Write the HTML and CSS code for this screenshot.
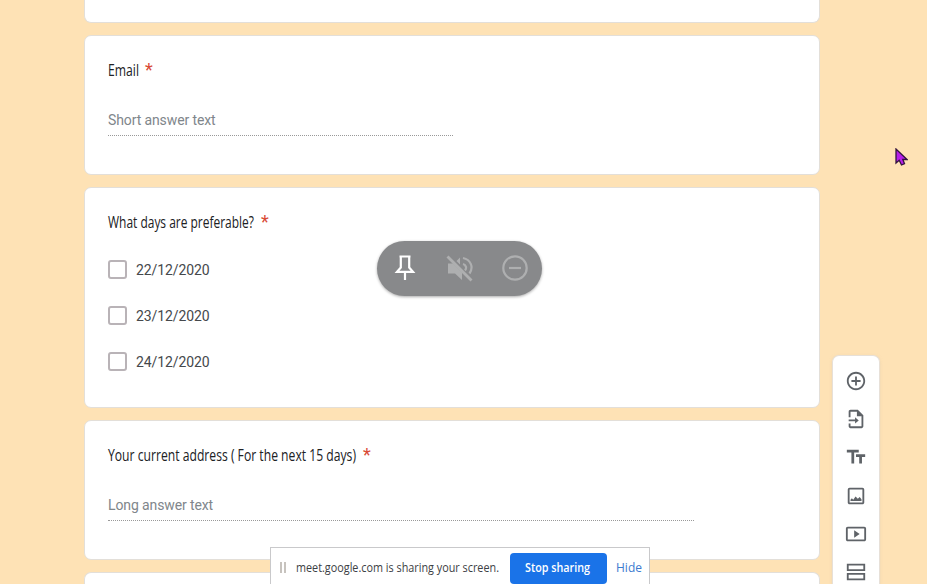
FILE: index.html
```html
<!DOCTYPE html>
<html lang="en">
<head>
<meta charset="utf-8">
<title>Form editor</title>
<link rel="stylesheet" href="styles.css">
</head>
<body>
<main class="form">
  <section class="card card-first"></section>
  <section class="card card-answer">
    <h2 class="question"><svg class="title" width="32" height="24"><text x="0" y="18" textLength="31" lengthAdjust="spacingAndGlyphs">Email</text></svg><span class="required">*</span></h2>
    <div class="answer answer-short">Short answer text</div>
  </section>
  <section class="card card-days">
    <h2 class="question"><svg class="title" width="148" height="24"><text x="0" y="18" textLength="146" lengthAdjust="spacingAndGlyphs">What days are preferable?</text></svg><span class="required">*</span></h2>
    <div class="options">
      <div class="option"><span class="box"></span><span class="date">22/12/2020</span></div>
      <div class="option"><span class="box"></span><span class="date">23/12/2020</span></div>
      <div class="option"><span class="box"></span><span class="date">24/12/2020</span></div>
    </div>
  </section>
  <section class="card card-answer">
    <h2 class="question"><svg class="title" width="250" height="24"><text x="0" y="18" textLength="248" lengthAdjust="spacingAndGlyphs">Your current address ( For the next 15 days)</text></svg><span class="required">*</span></h2>
    <div class="answer answer-long">Long answer text</div>
  </section>
  <section class="card card-last"></section>
</main>

<aside class="tools">
  <svg viewBox="0 0 24 24"><path d="M13 7h-2v4H7v2h4v4h2v-4h4v-2h-4V7zm-1-5C6.48 2 2 6.48 2 12s4.48 10 10 10 10-4.48 10-10S17.52 2 12 2zm0 18c-4.41 0-8-3.59-8-8s3.59-8 8-8 8 3.59 8 8-3.59 8-8 8z"/></svg>
  <svg viewBox="0 0 24 24"><path d="M14 2H6C4.900 2 4 2.900 4 4v6h2V4h7v5h5v11H6v-3H4v3c0 1.100.900 2 2 2h12c1.100 0 2-.900 2-2V8zM4 12.500v2h7V17l4-3.500-4-3.500v2.500z"/></svg>
  <svg viewBox="0 0 24 24"><path d="M2 4v3h5v12h3V7h5V4H2zm20 5H12v3h3.500v7h3v-7H22V9z"/></svg>
  <svg viewBox="0 0 24 24"><path d="M19 3H5a2 2 0 0 0-2 2v14c0 1.100.900 2 2 2h14c1.100 0 2-.900 2-2V5a2 2 0 0 0-2-2zm0 16H5V5h14v14zM6 17.500h12v-2l-2-2.500-2 2-2.500-2.500L9 16l-1.500-1.500L6 16z"/></svg>
  <svg viewBox="0 0 24 24"><path d="M10 8v8l6-4-6-4zm11-4H3c-1.100 0-2 .900-2 2v12c0 1.100.900 2 2 2h18c1.100 0 2-.900 2-2V6c0-1.100-.900-2-2-2zm0 14H3V6h18v12z"/></svg>
  <svg viewBox="0 0 24 24"><path d="M2 3v8h20V3H2zm18 6H4V5h16v4zM2 13v8h20v-8H2zm18 6H4v-4h16v4z"/></svg>
</aside>

<div class="pill">
  <svg class="pin" viewBox="0 0 28 28"><path d="M8.500 2.500h11M9.800 3v10.500L6 17.800h16l-3.800-4.300V3M14 18v8"/></svg>
  <svg class="mute" viewBox="0 0 28 28"><path class="fill" d="M2 9.500h5l9 9V26l-7-6.500H2zM10.500 7 14 3.500v7z"/><path d="M17 10c3 .8 4 4 2 6.500M17 4c7.500 1.500 11 9 6.500 15.500"/><path class="slash" d="M1.500 2.500l24 24"/></svg>
  <svg class="minus" viewBox="0 0 28 28"><circle cx="14" cy="14" r="11.700"/><path d="M8 14h12"/></svg>
</div>

<div class="share">
  <span class="grip"></span>
  <svg class="message" width="205" height="20"><text x="0" y="14" textLength="203" lengthAdjust="spacingAndGlyphs">meet.google.com is sharing your screen.</text></svg>
  <button class="stop"><svg width="67" height="20"><text x="0" y="14" textLength="65" lengthAdjust="spacingAndGlyphs">Stop sharing</text></svg></button>
  <a class="hide">Hide</a>
</div>

<svg class="cursor" viewBox="0 0 13 19"><path d="M1 1v14l3.200-2.700L6.500 17l3-1.300-1.700-4.200H12z"/></svg>
</body>
</html>
```

FILE: styles.css
```css
* { box-sizing: border-box; }
body {
  margin: 0;
  height: 584px;
  overflow: hidden;
  position: relative;
  background: #fee2b5;
  font-family: Roboto, "Liberation Sans", sans-serif;
}
.form {
  width: 736px;
  height: 584px;
  overflow: hidden;
  margin-left: 84px;
  display: flex;
  flex-direction: column;
  gap: 12px;
}
.card {
  flex: none;
  background: #fff;
  border: 1px solid #e3dfd9;
  border-radius: 7px;
  padding: 22px 23px;
}
.card-first { height: 23px; padding: 0; border-top: 0; border-radius: 0 0 7px 7px; }
.card-answer { height: 140px; }
.card-days { height: 221px; }
.card-last { height: 12px; padding: 0; border-bottom: 0; border-radius: 7px 7px 0 0; }
.question {
  margin: 0;
  height: 24px;
  display: flex;
  gap: 5px;
  font-weight: 400;
}
.title {
  font: 15.500px "Open Sans", sans-serif;
  fill: #202124;
  overflow: visible;
  flex: none;
}
.required { color: #d94a36; font-size: 18px; line-height: 24px; }
.answer {
  margin-top: 23px;
  height: 31px;
  line-height: 30px;
  font-size: 14px;
  letter-spacing: -.110px;
  color: #80868b;
  border-bottom: 1px dotted #999;
}
.answer-short { width: 345px; }
.answer-long { width: 586px; }
.options { margin-top: 25px; display: flex; flex-direction: column; gap: 26px; }
.option {
  height: 20px;
  display: flex;
  align-items: center;
  gap: 9px;
  font-size: 14px;
  letter-spacing: -.100px;
  color: #45484c;
}
.date { padding-top: 2px; }
.box { width: 19px; height: 19px; border: 2px solid #b9b3b7; border-radius: 3px; }
.tools {
  position: absolute;
  left: 832px;
  top: 355px;
  width: 48px;
  height: 229px;
  padding-top: 13px;
  display: flex;
  flex-direction: column;
  align-items: center;
  gap: 14.200px;
  background: #fff;
  border: 1px solid #e7e0d8;
  border-bottom: 0;
  border-radius: 7px 7px 0 0;
  box-shadow: 0 1px 3px #d8c8b080;
}
.tools svg { width: 24px; height: 24px; padding: 1px; flex: none; fill: #5f6368; }
.pill {
  position: absolute;
  left: 377px;
  top: 241px;
  width: 165px;
  height: 55px;
  padding-bottom: 2px;
  border-radius: 28px;
  display: flex;
  justify-content: center;
  align-items: center;
  gap: 27px;
  background: #88898b;
  box-shadow: 0 1px 3px #0005;
}
.pill svg { width: 28px; height: 28px; fill: none; stroke: #aeafb0; stroke-width: 2.200; }
.pill .pin { stroke: #fff; }
.pill .fill { fill: #aeafb0; stroke: none; }
.pill .slash { stroke-width: 2.800; }
.share {
  position: absolute;
  left: 270px;
  top: 547px;
  width: 380px;
  height: 37px;
  padding: 5px 9px 0 8px;
  display: flex;
  align-items: flex-start;
  background: #fff;
  border: 1px solid #c9c9cb;
  border-bottom: 0;
  font: 12px "Open Sans", sans-serif;
}
.grip { width: 6px; height: 11px; margin: 9px 10px 0 1px; border: solid #c7c3be; border-width: 0 2px; flex: none; }
.message { margin-top: 5px; fill: #3c4043; overflow: visible; flex: none; }
.stop {
  width: 97px;
  height: 31px;
  margin: 0 9px 0 9px;
  padding: 0 0 1px;
  display: flex;
  align-items: center;
  justify-content: center;
  border: 0;
  border-radius: 4px;
  background: #1a73e8;
  font: 600 12px "Open Sans", sans-serif;
  flex: none;
}
.stop svg { fill: #fff; overflow: visible; }
.hide { color: #3c7bd0; line-height: 29px; }
.cursor {
  position: absolute;
  left: 895px;
  top: 148px;
  width: 13px;
  height: 19px;
  fill: #b71fea;
  stroke: #32133e;
  stroke-width: 1.300;
}
```
